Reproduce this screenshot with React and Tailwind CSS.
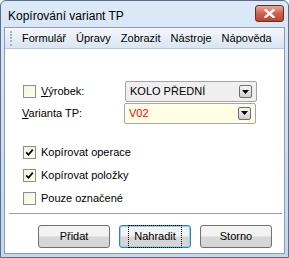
import React from 'react';

const font = { fontFamily: '"Liberation Sans", Arial, sans-serif' };

function Check({ checked }) {
  return (
    <span className="w-[13px] h-[13px] border border-[#8f8f8f] bg-gradient-to-br from-[#f3f3e4] to-[#ffffea] flex items-center justify-center">
      {checked && (
        <svg width="9" height="9" viewBox="0 0 9 9">
          <path d="M1.2 4.3 L3.5 6.8 L7.8 1.6" stroke="#000" strokeWidth="1.7" fill="none" />
        </svg>
      )}
    </span>
  );
}

function Combo({ value, yellow, red }) {
  return (
    <div
      className={`w-[132px] h-[21px] border border-[#a5a5a5] rounded-[2px] flex items-center pl-[4px] pr-[4px] ${
        yellow ? 'bg-[#ffffe6]' : 'bg-[#efefef]'
      }`}
    >
      <span className={`flex-1 ${red ? 'text-[#ee0000]' : 'text-black'}`}>{value}</span>
      <span className="w-[13px] h-[13px] border border-[#6f6f6f] rounded-[2px] bg-gradient-to-b from-[#f6f6f6] to-[#cfcfcf] flex items-center justify-center">
        <svg width="7" height="4" viewBox="0 0 7 4">
          <path d="M0 0 H7 L3.5 4 Z" fill="#000" />
        </svg>
      </span>
    </div>
  );
}

function Btn({ children, focused }) {
  return (
    <button
      className={`w-[72px] h-[23px] rounded-[3px] border bg-gradient-to-b from-[#f3f3f3] from-45% to-[#d6d6d6] to-55% flex items-center justify-center ${
        focused ? 'border-[#3c7fb1] shadow-[inset_0_0_0_1px_#8fd3f3]' : 'border-[#707070]'
      }`}
    >
      <span className={focused ? 'outline outline-1 outline-dotted outline-black outline-offset-[2px] px-[3px]' : ''}>
        {children}
      </span>
    </button>
  );
}

export default function App() {
  return (
    <div style={font} className="w-[289px] h-[258px] bg-white text-[11px] text-black">
      <div className="w-[289px] h-[258px] rounded-t-[6px] border border-[#5b6f8c] bg-gradient-to-b from-[#dce9f8] to-[#c3d7ee] flex flex-col">
        <div className="h-[26px] flex items-start pl-[7px] pr-[4px]">
          <span className="flex-1 text-[12px] pt-[6px]">Kopírování variant TP</span>
          <span className="mt-[4px] w-[29px] h-[17px] rounded-[3px] border border-[#6b2d28] bg-gradient-to-b from-[#e6a99d] from-0% via-[#d0604b] via-50% to-[#b8442f] flex items-center justify-center">
            <svg width="11" height="9" viewBox="0 0 11 9">
              <path d="M1.5 1 L9.5 8 M9.5 1 L1.5 8" stroke="#fff" strokeWidth="2.4" strokeLinecap="square" />
            </svg>
          </span>
        </div>
        <div className="mx-[3px] flex-1 flex flex-col border border-[#8b9bb0] bg-white">
          <div className="h-[21px] bg-gradient-to-b from-[#f5f8fc] to-[#dae4f2] border-b border-[#b9c8dc] flex items-center">
            <div className="w-[12px] h-[15px] flex flex-col justify-between items-center">
              {[0, 1, 2, 3, 4].map((i) => (
                <span key={i} className="w-[2px] h-[2px] bg-[#a4b3c8]" />
              ))}
            </div>
            <div className="flex gap-[10px] pl-[5px]">
              <span>Formulář</span>
              <span>Úpravy</span>
              <span>Zobrazit</span>
              <span>Nástroje</span>
              <span>Nápověda</span>
            </div>
          </div>
          <div className="flex-1 flex flex-col pb-[5px]">
            <div className="flex flex-col gap-[1px] pl-[18px] pt-[32px]">
              <div className="h-[21px] flex items-center">
                <Check />
                <span className="w-[89px] pl-[5px]">
                  <u>V</u>ýrobek:
                </span>
                <Combo value="KOLO PŘEDNÍ" />
              </div>
              <div className="h-[20px] flex items-center">
                <span className="w-[102px] -ml-[1px]">
                  <u>V</u>arianta TP:
                </span>
                <Combo value="V02" yellow red />
              </div>
            </div>
            <div className="flex flex-col gap-[1px] pl-[18px] pt-[18px]">
              <div className="h-[22px] flex items-center gap-[5px]">
                <Check checked />
                <span>Kopírovat operace</span>
              </div>
              <div className="h-[22px] flex items-center gap-[5px]">
                <Check checked />
                <span>Kopírovat položky</span>
              </div>
              <div className="h-[22px] flex items-center gap-[5px]">
                <Check />
                <span>Pouze označené</span>
              </div>
            </div>
            <div className="mt-[4px] ml-[4px] mr-[2px] h-[1px] bg-[#a0a0a0]" />
            <div className="flex gap-[9px] pt-[11px] pl-[33px]">
              <Btn>Přidat</Btn>
              <Btn focused>Nahradit</Btn>
              <Btn>Storno</Btn>
            </div>
          </div>
        </div>
        <div className="h-[3px]" />
      </div>
    </div>
  );
}
